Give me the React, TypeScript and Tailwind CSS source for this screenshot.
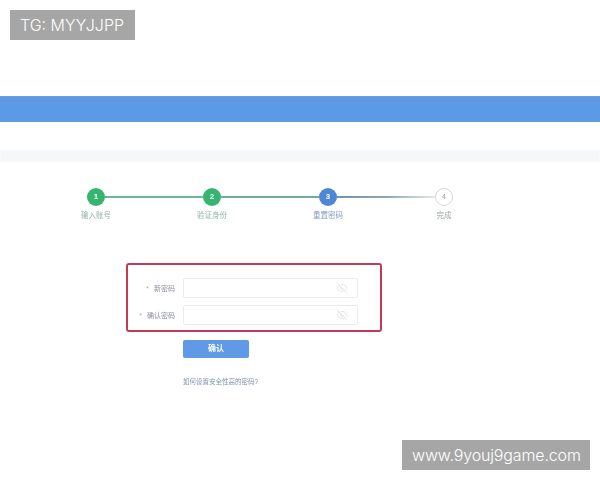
import { EyeOff } from 'lucide-react';

const sans = 'font-["Liberation_Sans","Noto_Sans_CJK_SC",sans-serif]';

function Dot({ n, color }: { n: string; color: string }) {
  return (
    <div className={`w-[18px] h-[18px] rounded-full shrink-0 flex items-center justify-center text-white text-[8px] font-bold ${color}`}>
      {n}
    </div>
  );
}

function Steps() {
  const labels = ['输入账号', '验证身份', '重置密码', '完成'];
  return (
    <div className="mt-[26px] blur-[0.5px]">
      <div className="flex items-center ml-[87px] w-[366px]">
        <Dot n="1" color="bg-[#35b56e]" />
        <div className="w-[98px] h-[2px] bg-[#6fb795]" />
        <Dot n="2" color="bg-[#35b56e]" />
        <div className="w-[98px] h-[2px] bg-[#6fae98]" />
        <Dot n="3" color="bg-[#4f86d6]" />
        <div className="w-[98px] h-[2px] bg-gradient-to-r from-[#6f94b0] via-[#8ba5b8] to-[#e4e7ea]" />
        <div className="w-[18px] h-[18px] rounded-full shrink-0 border border-[#d5d8dc] bg-white flex items-center justify-center text-[#9a9a9a] text-[7px]">
          4
        </div>
      </div>
      <div className="flex ml-[38px] mt-[4px]">
        {labels.map((label, i) => (
          <div
            key={label}
            className={`w-[116px] text-center text-[7.5px] leading-[12px] ${i === 2 ? 'text-[#7f9cc0]' : i === 3 ? 'text-[#9aa5a5]' : 'text-[#8fb5a5]'}`}
          >
            {label}
          </div>
        ))}
      </div>
    </div>
  );
}

function PasswordRow({ label }: { label: string }) {
  return (
    <div className="flex items-center h-[20px]">
      <div className="w-[40px] shrink-0 text-right text-[7px] leading-none text-[#8a8f96] blur-[0.4px] whitespace-nowrap">
        <span className="text-[#d8a070] mr-[5px]">*</span>
        {label}
      </div>
      <div className="ml-[8px] w-[175px] h-[20px] rounded-[2px] border border-[#e9ebee] bg-white flex items-center justify-end pr-[9px]">
        <EyeOff className="w-[12px] h-[12px] text-[#c9ccce] blur-[0.3px]" strokeWidth={1} />
      </div>
    </div>
  );
}

export default function App() {
  return (
    <div className={`relative w-[600px] h-[480px] overflow-hidden bg-white ${sans}`}>
      <div className="pt-[96px]">
        <div className="h-[26px] bg-[#5c9ae6] border-t border-[#6a9fd8]" />
        <div className="mt-[28px] h-[12px] bg-[#f6f7f9] blur-[1px]" />
        <Steps />

        <div className="mt-[41px] ml-[126px] w-[256px] h-[69px] rounded-[3px] border-2 border-[#c23a55] pt-[13px] pl-[7px] flex flex-col gap-[7px]">
          <PasswordRow label="新密码" />
          <PasswordRow label="确认密码" />
        </div>

        <div className="mt-[8px] ml-[183px] w-[66px] h-[18px] rounded-[2px] bg-[#609ae6] flex items-center justify-center text-white text-[8px] font-bold blur-[0.4px]">
          确认
        </div>
        <div className="mt-[19px] ml-[183px] text-[6.5px] leading-[10px] text-[#7f93ad] blur-[0.4px]">
          如何设置安全性高的密码?
        </div>
      </div>

      <div className='absolute left-[10px] top-[10px] w-[125px] h-[30px] bg-[#a6a6a6] text-white text-[16px] leading-[30px] pl-[10px] font-["Inter",sans-serif] font-light'>
        TG: MYYJJPP
      </div>
      <div className='absolute left-[402px] top-[440px] w-[188px] h-[30px] bg-[#a6a6a6] text-white text-[16px] tracking-[-0.15px] leading-[30px] pl-[10px] font-["Inter",sans-serif] font-light whitespace-nowrap'>
        www.9youj9game.com
      </div>
    </div>
  );
}
